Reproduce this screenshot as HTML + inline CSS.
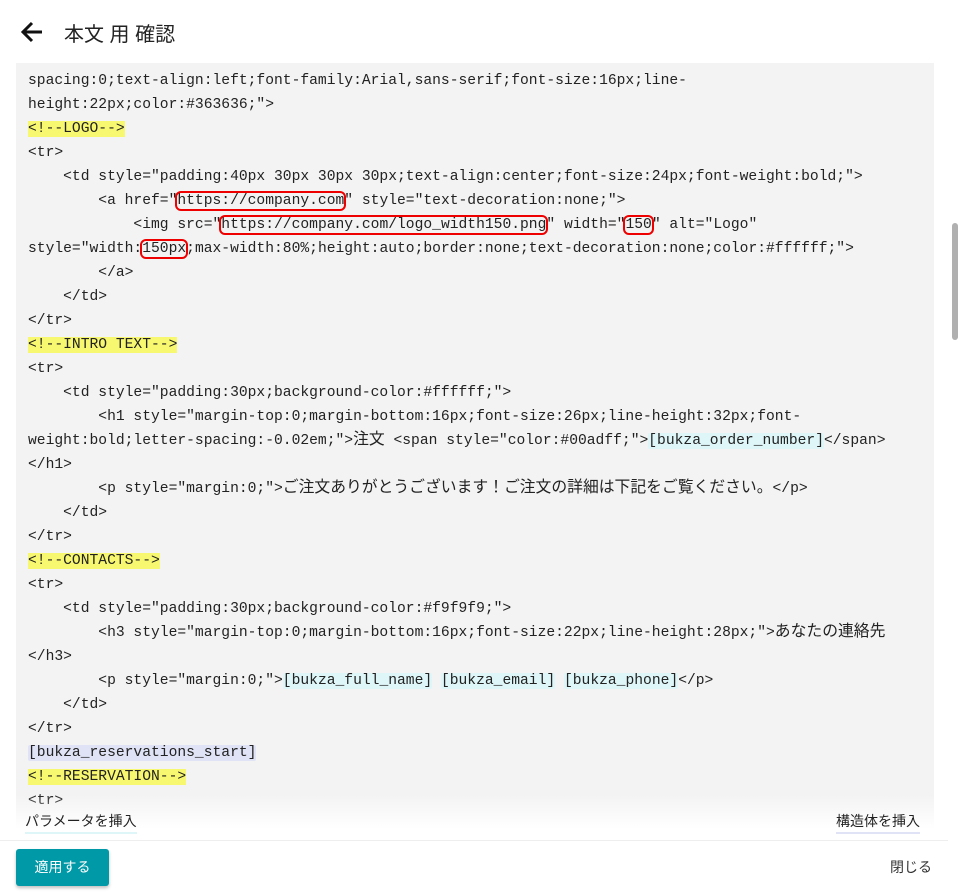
<!DOCTYPE html>
<html><head><meta charset="utf-8"><style>
body{margin:0;width:960px;height:893px;background:#fff;position:relative;overflow:hidden;font-family:"Liberation Sans","Noto Sans CJK JP",sans-serif;}
.hdr{position:absolute;left:0;top:0;width:960px;height:63px;}
.title{position:absolute;left:64px;top:18px;font-size:20px;color:#222;}
.code{position:absolute;left:16px;top:63px;width:918px;height:777px;background:#f3f3f3;overflow:hidden;}
.fade{position:absolute;left:16px;top:795px;width:918px;height:45px;background:linear-gradient(rgba(255,255,255,0),#fff 75%);}
pre{margin:0;position:absolute;left:12px;top:6px;font-family:"Liberation Mono","Noto Sans CJK JP",monospace;font-size:14.65px;line-height:24px;color:#222;white-space:pre;}
.j{font-size:15.8px;font-family:"Noto Sans CJK JP",sans-serif;line-height:0;}
.y{background:#f8f870;}
.c{background:#dff6f8;border-radius:2px;}
.b{background:#dfe3f5;border-radius:2px;}
.r{outline:2px solid #e00;border-radius:4px;}
.sb{position:absolute;left:952px;top:223px;width:6px;height:117px;background:#b0b0b0;border-radius:3px;}
.lnk{position:absolute;top:811px;font-size:14px;color:#222;border-bottom:2px solid #dff6f8;padding-bottom:1px;}
.btn{position:absolute;left:16px;top:849px;width:93px;height:37px;background:#0099a8;color:#fff;font-size:14px;line-height:37px;text-align:center;border-radius:3px;box-shadow:0 2px 3px rgba(0,0,0,.25);}
.close{position:absolute;left:890px;top:857px;font-size:14px;color:#333;}
</style></head><body>
<div class="hdr">
<svg style="position:absolute;left:20px;top:21px" width="24" height="22" viewBox="0 0 24 22"><path d="M22 11H4M12 2L3 11l9 9" stroke="#111" stroke-width="3" fill="none"/></svg>
<div class="title">本文 用 確認</div>
</div>
<div class="code"><pre>spacing:0;text-align:left;font-family:Arial,sans-serif;font-size:16px;line-
height:22px;color:#363636;"&gt;
<span class="y">&lt;!--LOGO--&gt;</span>
&lt;tr&gt;
    &lt;td style="padding:40px 30px 30px 30px;text-align:center;font-size:24px;font-weight:bold;"&gt;
        &lt;a href="<span class="r">https://company.com</span>" style="text-decoration:none;"&gt;
            &lt;img src="<span class="r">https://company.com/logo_width150.png</span>" width="<span class="r">150</span>" alt="Logo"
style="width:<span class="r">150px</span>;max-width:80%;height:auto;border:none;text-decoration:none;color:#ffffff;"&gt;
        &lt;/a&gt;
    &lt;/td&gt;
&lt;/tr&gt;
<span class="y">&lt;!--INTRO TEXT--&gt;</span>
&lt;tr&gt;
    &lt;td style="padding:30px;background-color:#ffffff;"&gt;
        &lt;h1 style="margin-top:0;margin-bottom:16px;font-size:26px;line-height:32px;font-
weight:bold;letter-spacing:-0.02em;"&gt;<span class="j">注文</span> &lt;span style="color:#00adff;"&gt;<span class="c">[bukza_order_number]</span>&lt;/span&gt;
&lt;/h1&gt;
        &lt;p style="margin:0;"&gt;<span class="j">ご注文ありがとうございます！ご注文の詳細は下記をご覧ください。</span>&lt;/p&gt;
    &lt;/td&gt;
&lt;/tr&gt;
<span class="y">&lt;!--CONTACTS--&gt;</span>
&lt;tr&gt;
    &lt;td style="padding:30px;background-color:#f9f9f9;"&gt;
        &lt;h3 style="margin-top:0;margin-bottom:16px;font-size:22px;line-height:28px;"&gt;<span class="j">あなたの連絡先</span>
&lt;/h3&gt;
        &lt;p style="margin:0;"&gt;<span class="c">[bukza_full_name]</span> <span class="c">[bukza_email]</span> <span class="c">[bukza_phone]</span>&lt;/p&gt;
    &lt;/td&gt;
&lt;/tr&gt;
<span class="b">[bukza_reservations_start]</span>
<span class="y">&lt;!--RESERVATION--&gt;</span>
&lt;tr&gt;</pre></div>
<div class="fade"></div>
<div class="lnk" style="left:25px">パラメータを挿入</div>
<div class="lnk" style="left:836px;border-color:#dfe3f5">構造体を挿入</div>
<div style="position:absolute;left:0;top:840px;width:948px;height:1px;background:#eee"></div>
<div class="sb"></div>
<div class="btn">適用する</div>
<div class="close">閉じる</div>
</body></html>
